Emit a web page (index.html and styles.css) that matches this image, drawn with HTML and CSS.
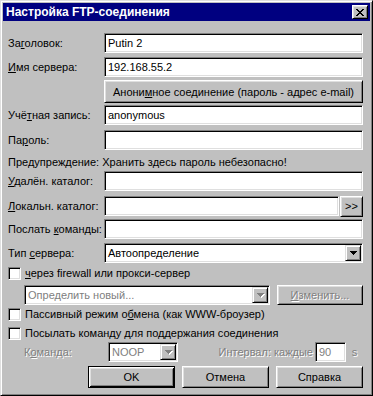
FILE: index.html
```html
<!DOCTYPE html>
<html lang="ru">
<head>
    <meta charset="UTF-8">
    <title>Настройка FTP-соединения</title>
    <link rel="stylesheet" href="styles.css">
</head>
<body>
    <div class="window">
        <div class="titlebar">
            <span class="title">Настройка FTP-соединения</span>
            <span class="close">
                <svg width="8" height="7" viewBox="0 0 8 7" shape-rendering="crispEdges">
                    <path d="M0 0h2v1H0zM6 0h2v1H6zM1 1h2v1H1zM5 1h2v1H5zM2 2h4v1H2zM3 3h2v1H3zM2 4h4v1H2zM1 5h2v1H1zM5 5h2v1H5zM0 6h2v1H0zM6 6h2v1H6z" fill="#000"/>
                </svg>
            </span>
        </div>

        <div class="content">
            <div class="row">
                <span class="lbl">За<u>г</u>оловок:</span>
                <div class="field">Putin 2</div>
            </div>
            <div class="row mt4">
                <span class="lbl"><u>И</u>мя сервера:</span>
                <div class="field">192.168.55.2</div>
            </div>
            <div class="row tall mt3">
                <span class="lbl"></span>
                <div class="btn wide">Анони<u>м</u>ное соединение (пароль - адрес e-mail)</div>
            </div>
            <div class="row mt2">
                <span class="lbl">Учё<u>т</u>ная запись:</span>
                <div class="field">anonymous</div>
            </div>
            <div class="row mt5">
                <span class="lbl">Па<u>р</u>оль:</span>
                <div class="field"></div>
            </div>
            <div class="note mt5">Предупреждение: Хранить здесь пароль небезопасно!</div>
            <div class="row mt2">
                <span class="lbl"><u>У</u>далён. каталог:</span>
                <div class="field"></div>
            </div>
            <div class="row mt5">
                <span class="lbl"><u>Л</u>окальн. каталог:</span>
                <div class="field"></div>
                <div class="btn browse">&gt;&gt;</div>
            </div>
            <div class="row mt3">
                <span class="lbl">Послать <u>к</u>оманды:</span>
                <div class="field"></div>
            </div>
            <div class="row mt4">
                <span class="lbl">Тип <u>с</u>ервера:</span>
                <div class="field select">
                    <span>Автоопределение</span>
                    <span class="arrow">
                        <svg width="7" height="4" viewBox="0 0 7 4" shape-rendering="crispEdges"><path d="M0 0h7v1H0zM1 1h5v1H1zM2 2h3v1H2zM3 3h1v1H3z" fill="#000"/></svg>
                    </span>
                </div>
            </div>
            <label class="checkrow mt3">
                <span class="check"></span>
                <span><u>ч</u>ерез firewall или прокси-сервер</span>
            </label>
            <div class="row mt5 indent">
                <div class="field select proxy disabled">
                    <span>Определить новый...</span>
                    <span class="arrow off">
                        <svg width="8" height="5" viewBox="0 0 8 5" shape-rendering="crispEdges"><path d="M1 1h7v1H1zM2 2h5v1H2zM3 3h3v1H3zM4 4h1v1H4z" fill="#fff"/><path d="M0 0h7v1H0zM1 1h5v1H1zM2 2h3v1H2zM3 3h1v1H3z" fill="#808080"/></svg>
                    </span>
                </div>
                <div class="btn edit disabled"><span><u>И</u>зменить...</span></div>
            </div>
            <label class="checkrow mt2">
                <span class="check"></span>
                <span>Пассивный режим о<u>б</u>мена (как WWW-броузер)</span>
            </label>
            <label class="checkrow mt5">
                <span class="check"></span>
                <span>Посылать команду для поддержания соединения</span>
            </label>
            <div class="row mt2 indent disabled">
                <span class="lbl short">К<u>о</u>манда:</span>
                <div class="field select noop">
                    <span>NOOP</span>
                    <span class="arrow off">
                        <svg width="8" height="5" viewBox="0 0 8 5" shape-rendering="crispEdges"><path d="M1 1h7v1H1zM2 2h5v1H2zM3 3h3v1H3zM4 4h1v1H4z" fill="#fff"/><path d="M0 0h7v1H0zM1 1h5v1H1zM2 2h3v1H2zM3 3h1v1H3z" fill="#808080"/></svg>
                    </span>
                </div>
                <span class="interval">Интервал: каждые</span>
                <div class="field secs">90</div>
                <span class="unit">s</span>
            </div>
            <div class="actions mt4">
                <div class="btn action default">OK</div>
                <div class="btn action">Отмена</div>
                <div class="btn action">Справка</div>
            </div>
        </div>
    </div>
</body>
</html>
```

FILE: styles.css
```css
* {
    margin: 0;
    padding: 0;
    box-sizing: border-box;
}

body {
    font-family: 'Liberation Sans', Arial, sans-serif;
    font-size: 11px;
    color: #000;
    background: #c0c0c0;
}

u {
    text-underline-offset: 1px;
}

.window {
    width: 373px;
    height: 396px;
    background: #c0c0c0;
    border: 1px solid;
    border-color: #dfdfdf #000 #000 #dfdfdf;
    box-shadow: inset 1px 1px #fff, inset -1px -1px #808080;
    padding: 2px;
    display: flex;
    flex-direction: column;
}

.titlebar {
    height: 18px;
    background: #000080;
    color: #fff;
    display: flex;
    align-items: center;
    justify-content: space-between;
    padding: 0 2px 0 3px;
}

.title {
    font-weight: bold;
    font-size: 12px;
}

.close {
    width: 16px;
    height: 14px;
    background: #c0c0c0;
    border: 1px solid;
    border-color: #fff #000 #000 #fff;
    box-shadow: inset 1px 1px #dfdfdf, inset -1px -1px #808080;
    display: flex;
    align-items: center;
    justify-content: center;
}

.content {
    padding: 12px 7px 0 5px;
    display: flex;
    flex-direction: column;
}

.mt2 { margin-top: 2px; }
.mt3 { margin-top: 3px; }
.mt4 { margin-top: 4px; }
.mt5 { margin-top: 5px; }

.row {
    display: flex;
    align-items: center;
    height: 20px;
}

.row.tall {
    height: 23px;
}

.indent {
    padding-left: 16px;
}

.lbl {
    width: 96px;
    flex: none;
    white-space: nowrap;
}

.field {
    flex: 1;
    height: 20px;
    background: #fff;
    border: 1px solid;
    border-color: #808080 #fff #fff #808080;
    box-shadow: inset 1px 1px #000, inset -1px -1px #dfdfdf;
    padding: 0 3px;
    display: flex;
    align-items: center;
    white-space: nowrap;
}

.select {
    padding: 1px 1px 1px 3px;
    justify-content: space-between;
}

.arrow {
    width: 16px;
    height: 16px;
    flex: none;
    background: #c0c0c0;
    border: 1px solid;
    border-color: #dfdfdf #000 #000 #dfdfdf;
    box-shadow: inset 1px 1px #fff, inset -1px -1px #808080;
    display: flex;
    align-items: center;
    justify-content: center;
}

.arrow.off svg {
    margin: 1px 0 0 1px;
}

.btn {
    background: #c0c0c0;
    border: 1px solid;
    border-color: #fff #000 #000 #fff;
    box-shadow: inset 1px 1px #dfdfdf, inset -1px -1px #808080;
    display: flex;
    align-items: center;
    justify-content: center;
    white-space: nowrap;
}

.btn.wide {
    flex: 1;
    height: 23px;
}

.btn.browse {
    width: 23px;
    height: 21px;
    margin-left: 1px;
    flex: none;
}

.note {
    height: 14px;
    line-height: 14px;
    white-space: nowrap;
}

.checkrow {
    display: flex;
    align-items: center;
    height: 14px;
    white-space: nowrap;
}

.check {
    width: 13px;
    height: 13px;
    flex: none;
    background: #fff;
    border: 1px solid;
    border-color: #808080 #fff #fff #808080;
    box-shadow: inset 1px 1px #000, inset -1px -1px #dfdfdf;
    margin-right: 4px;
}

.disabled {
    color: #808080;
    text-shadow: 1px 1px #fff;
}

.field.disabled,
.disabled .field {
    text-shadow: none;
}

.proxy {
    flex: none;
    width: 246px;
}

.btn.edit {
    flex: none;
    width: 86px;
    height: 20px;
    margin-left: auto;
}

.lbl.short {
    width: 84px;
}

.noop {
    flex: none;
    width: 70px;
}

.interval {
    margin-left: auto;
    margin-right: 2px;
}

.secs {
    flex: none;
    width: 31px;
}

.unit {
    width: 17px;
    text-align: center;
}

.actions {
    display: flex;
    justify-content: flex-end;
    gap: 7px;
}

.btn.action {
    width: 87px;
    height: 22px;
}

.btn.default {
    border-color: #000;
    box-shadow: inset 1px 1px #fff, inset -1px -1px #000, inset 2px 2px #dfdfdf, inset -2px -2px #808080;
}
```
